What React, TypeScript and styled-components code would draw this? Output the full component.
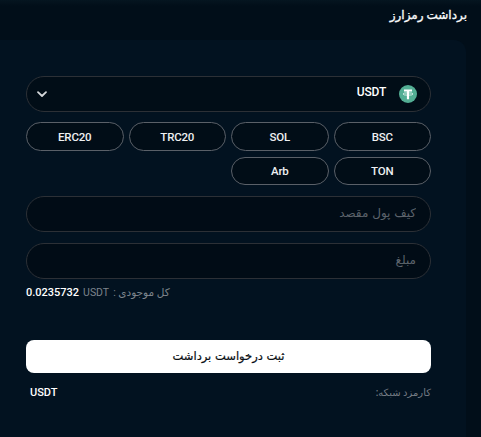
import React from "react";
import styled, { createGlobalStyle } from "styled-components";

const Global = createGlobalStyle`
  html, body { margin: 0; padding: 0; background: #010e19; }
  body { font-family: Roboto, "DejaVu Sans", sans-serif; }
  * { box-sizing: border-box; }
`;
const Page = styled.div`
  width: 481px; height: 437px; overflow: hidden; direction: rtl;
  background: linear-gradient(#051520 0, #010e19 6px);
  display: flex; flex-direction: column;
`;
const Title = styled.h1`
  margin: 0; height: 40px; padding: 5px 14px 0 0;
  font-size: 12px; line-height: 20px; font-weight: 400; color: #f8f9fa;
  -webkit-text-stroke: 0.35px #f8f9fa;
`;
const Panel = styled.div`
  flex: 1; width: 466px; background: #021220;
  border-top-right-radius: 12px;
  padding: 36px 35px 0 26px;
  align-self: flex-end;
`;
const Wrap = styled.div`
  display: flex; flex-direction: column; width: 405px;
`;
const Select = styled.div`
  height: 36px; border: 1px solid #2c3036; border-radius: 18px; background: #010d17;
  display: flex; align-items: center; padding: 0 13px 0 9px; color: #fff;
  font-size: 12px; font-weight: 500; letter-spacing: -0.2px;
`;
const Coin = styled.svg` width: 18px; height: 18px; flex: none; margin-left: 13px; `;
const Symbol = styled.span` margin-bottom: 5px; `;
const Chevron = styled.svg` width: 12px; height: 12px; margin-right: auto; `;
const Networks = styled.div`
  display: grid; grid-template-columns: repeat(4, 1fr); gap: 6px 5px; margin-top: 10px;
`;
const Network = styled.button`
  height: 28.5px; border: 1px solid #5a6068; border-radius: 15px; background: #010d17;
  color: #eef0f2; font: 500 11.5px Roboto, sans-serif; letter-spacing: -0.2px; padding: 1px 0 0;
`;
const Field = styled.input`
  display: block; width: 100%; height: 36px; margin-top: 11px;
  border: 1px solid #2c3036; border-radius: 18px; background: #010c16; padding: 0 14px 2px;
  font: 400 12px "DejaVu Sans", sans-serif; color: #fff; direction: rtl; outline: none;
  &::placeholder { color: #5c636b; opacity: 1; }
`;
const Balance = styled.div`
  margin-top: 7px; height: 14px; display: flex; align-items: center; justify-content: flex-end; gap: 4px;
  font-size: 10.5px; color: #7d848c; line-height: 14px; font-weight: 400;
`;
const Amount = styled.b`
  color: #fff; font-weight: 500; font-size: 11px;
`;
const Submit = styled.button`
  margin-top: 40px; height: 33px; border: 0; border-radius: 8px; background: #fff;
  color: #0a0f14; font: 400 11.5px "DejaVu Sans", sans-serif; padding: 0 0 2px;
  -webkit-text-stroke: 0.2px #0a0f14;
`;
const Fee = styled.div`
  margin-top: 13px; display: flex; justify-content: space-between; align-items: center;
  padding-left: 4px; font-size: 10px; color: #757c84; font-weight: 500;
`;
const FeeValue = styled.span` color: #fff; font-size: 11px; font-weight: 500; `;

export default function App() {
  return (
    <Page>
      <Global />
      <Title>برداشت رمزارز</Title>
      <Panel>
        <Wrap>
          <Select>
            <Coin viewBox="0 0 18 18">
              <circle cx="9" cy="9" r="9" fill="#53ae94" />
              <path d="M5 4.6h8v2H10.1v7.6H7.9V6.6H5z" fill="#fff" />
              <ellipse cx="9" cy="9" rx="5" ry="1.2" fill="none" stroke="#fff" strokeWidth="0.7" />
            </Coin>
            <Symbol>USDT</Symbol>
            <Chevron viewBox="0 0 12 12" fill="none" stroke="#d5d8db" strokeWidth="1.8" strokeLinecap="round" strokeLinejoin="round">
              <path d="M2 4.2 6 8l4-3.8" />
            </Chevron>
          </Select>
          <Networks>
            {["BSC", "SOL", "TRC20", "ERC20", "TON", "Arb"].map((n) => (
              <Network key={n}>{n}</Network>
            ))}
          </Networks>
          <Field placeholder="کیف پول مقصد" />
          <Field placeholder="مبلغ" />
          <Balance>
            <span>کل موجودی :</span>
            <span>USDT</span>
            <Amount>0.0235732</Amount>
          </Balance>
          <Submit>ثبت درخواست برداشت</Submit>
          <Fee>
            <span>کارمزد شبکه:</span>
            <FeeValue>USDT</FeeValue>
          </Fee>
        </Wrap>
      </Panel>
    </Page>
  );
}
